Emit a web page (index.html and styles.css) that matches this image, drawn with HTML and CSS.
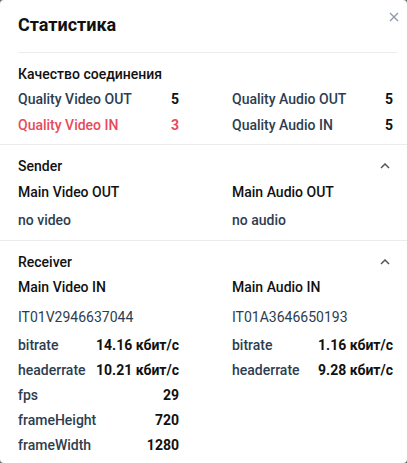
FILE: index.html
```html
<!DOCTYPE html>
<html lang="ru">
<head>
<meta charset="utf-8">
<title>Статистика</title>
<link rel="stylesheet" href="styles.css">
</head>
<body>
<div class="modal">
  <header class="modal-header">
    <h1 class="title">Статистика</h1>
  </header>
  <button class="close" aria-label="close">
    <svg width="10" height="10" viewBox="0 0 10 10"><path d="M1 1L9 9M9 1L1 9" stroke="#8d9bab" stroke-width="1.4" fill="none"/></svg>
  </button>

  <section class="section quality">
    <h2 class="heading">Качество соединения</h2>
    <div class="grid">
      <div class="stat"><span class="label">Quality Video OUT</span><span class="value">5</span></div>
      <div class="stat"><span class="label">Quality Audio OUT</span><span class="value">5</span></div>
      <div class="stat bad"><span class="label">Quality Video IN</span><span class="value">3</span></div>
      <div class="stat"><span class="label">Quality Audio IN</span><span class="value">5</span></div>
    </div>
  </section>

  <section class="section sender">
    <div class="section-head">
      <h2 class="heading">Sender</h2>
      <svg class="chev" width="10" height="6" viewBox="0 0 10 6"><path d="M1 5L5 1L9 5" stroke="#555" stroke-width="1.5" fill="none"/></svg>
    </div>
    <div class="grid">
      <div class="col">
        <h3 class="sub">Main Video OUT</h3>
        <div class="track">no video</div>
      </div>
      <div class="col">
        <h3 class="sub">Main Audio OUT</h3>
        <div class="track">no audio</div>
      </div>
    </div>
  </section>

  <section class="section receiver">
    <div class="section-head">
      <h2 class="heading">Receiver</h2>
      <svg class="chev" width="10" height="6" viewBox="0 0 10 6"><path d="M1 5L5 1L9 5" stroke="#555" stroke-width="1.5" fill="none"/></svg>
    </div>
    <div class="grid">
      <div class="col">
        <h3 class="sub">Main Video IN</h3>
        <div class="track id">IT01V2946637044</div>
        <div class="rows">
          <div class="stat row"><span class="label">bitrate</span><span class="value">14.16 кбит/с</span></div>
          <div class="stat row"><span class="label">headerrate</span><span class="value">10.21 кбит/с</span></div>
          <div class="stat row"><span class="label">fps</span><span class="value">29</span></div>
          <div class="stat row"><span class="label">frameHeight</span><span class="value">720</span></div>
          <div class="stat row"><span class="label">frameWidth</span><span class="value">1280</span></div>
        </div>
      </div>
      <div class="col">
        <h3 class="sub">Main Audio IN</h3>
        <div class="track id">IT01A3646650193</div>
        <div class="rows">
          <div class="stat row"><span class="label">bitrate</span><span class="value">1.16 кбит/с</span></div>
          <div class="stat row"><span class="label">headerrate</span><span class="value">9.28 кбит/с</span></div>
        </div>
      </div>
    </div>
  </section>
</div>
</body>
</html>
```
FILE: styles.css
```css
* { box-sizing: border-box; }
html { background: #6b6f75; }
body {
  margin: 0;
  font-family: Roboto, "Noto Sans", Arial, sans-serif;
  font-size: 14px;
  color: #111;
}
.modal {
  position: relative;
  width: 407px;
  height: 463px;
  background: #fff;
  border-radius: 4px;
  overflow: hidden;
}
.modal-header {
  height: 53px;
  margin: 0 10px 0 18px;
  border-bottom: 1px solid #ececec;
  display: flex;
  align-items: center;
  padding-bottom: 3px;
}
.title {
  margin: 0;
  font-size: 18px;
  font-weight: 700;
  color: #111;
  line-height: 24px;
}
.close {
  position: absolute;
  top: 11px;
  right: 7px;
  width: 12px;
  height: 12px;
  padding: 0;
  border: 0;
  background: none;
  display: flex;
  align-items: center;
  justify-content: center;
}
.section {
  padding: 11px 14px 0 18px;
  border-bottom: 1px solid #ececec;
}
.heading {
  margin: 0;
  font-size: 14px;
  font-weight: 500;
  line-height: 20px;
  color: #111;
}
.quality { padding-bottom: 6px; }
.quality .heading { margin-bottom: 2px; }
.grid {
  display: grid;
  grid-template-columns: 161px 161px;
  column-gap: 53px;
}
.stat {
  display: flex;
  justify-content: space-between;
  align-items: center;
  height: 26px;
}
.label {
  font-weight: 500;
  color: #2d3d50;
}
.value {
  font-weight: 700;
  color: #111;
}
.bad .label, .bad .value { color: #e84a5a; }
.section-head {
  display: flex;
  justify-content: space-between;
  align-items: center;
  height: 20px;
}
.chev { margin-right: 3px; }
.sender { padding-bottom: 10px; }
.sub {
  margin: 0;
  font-size: 14px;
  font-weight: 500;
  line-height: 20px;
  color: #111;
}
.sender .sub { margin-top: 6px; }
.receiver .sub { margin-top: 5px; }
.receiver { border-bottom: 0; }
.track {
  line-height: 20px;
  color: #2d3d50;
  font-weight: 500;
}
.sender .track { margin-top: 8px; }
.receiver .track { margin-top: 10px; }
.track.id { font-weight: 400; }
.rows { margin-top: 5px; }
.row { height: 25px; }
```
